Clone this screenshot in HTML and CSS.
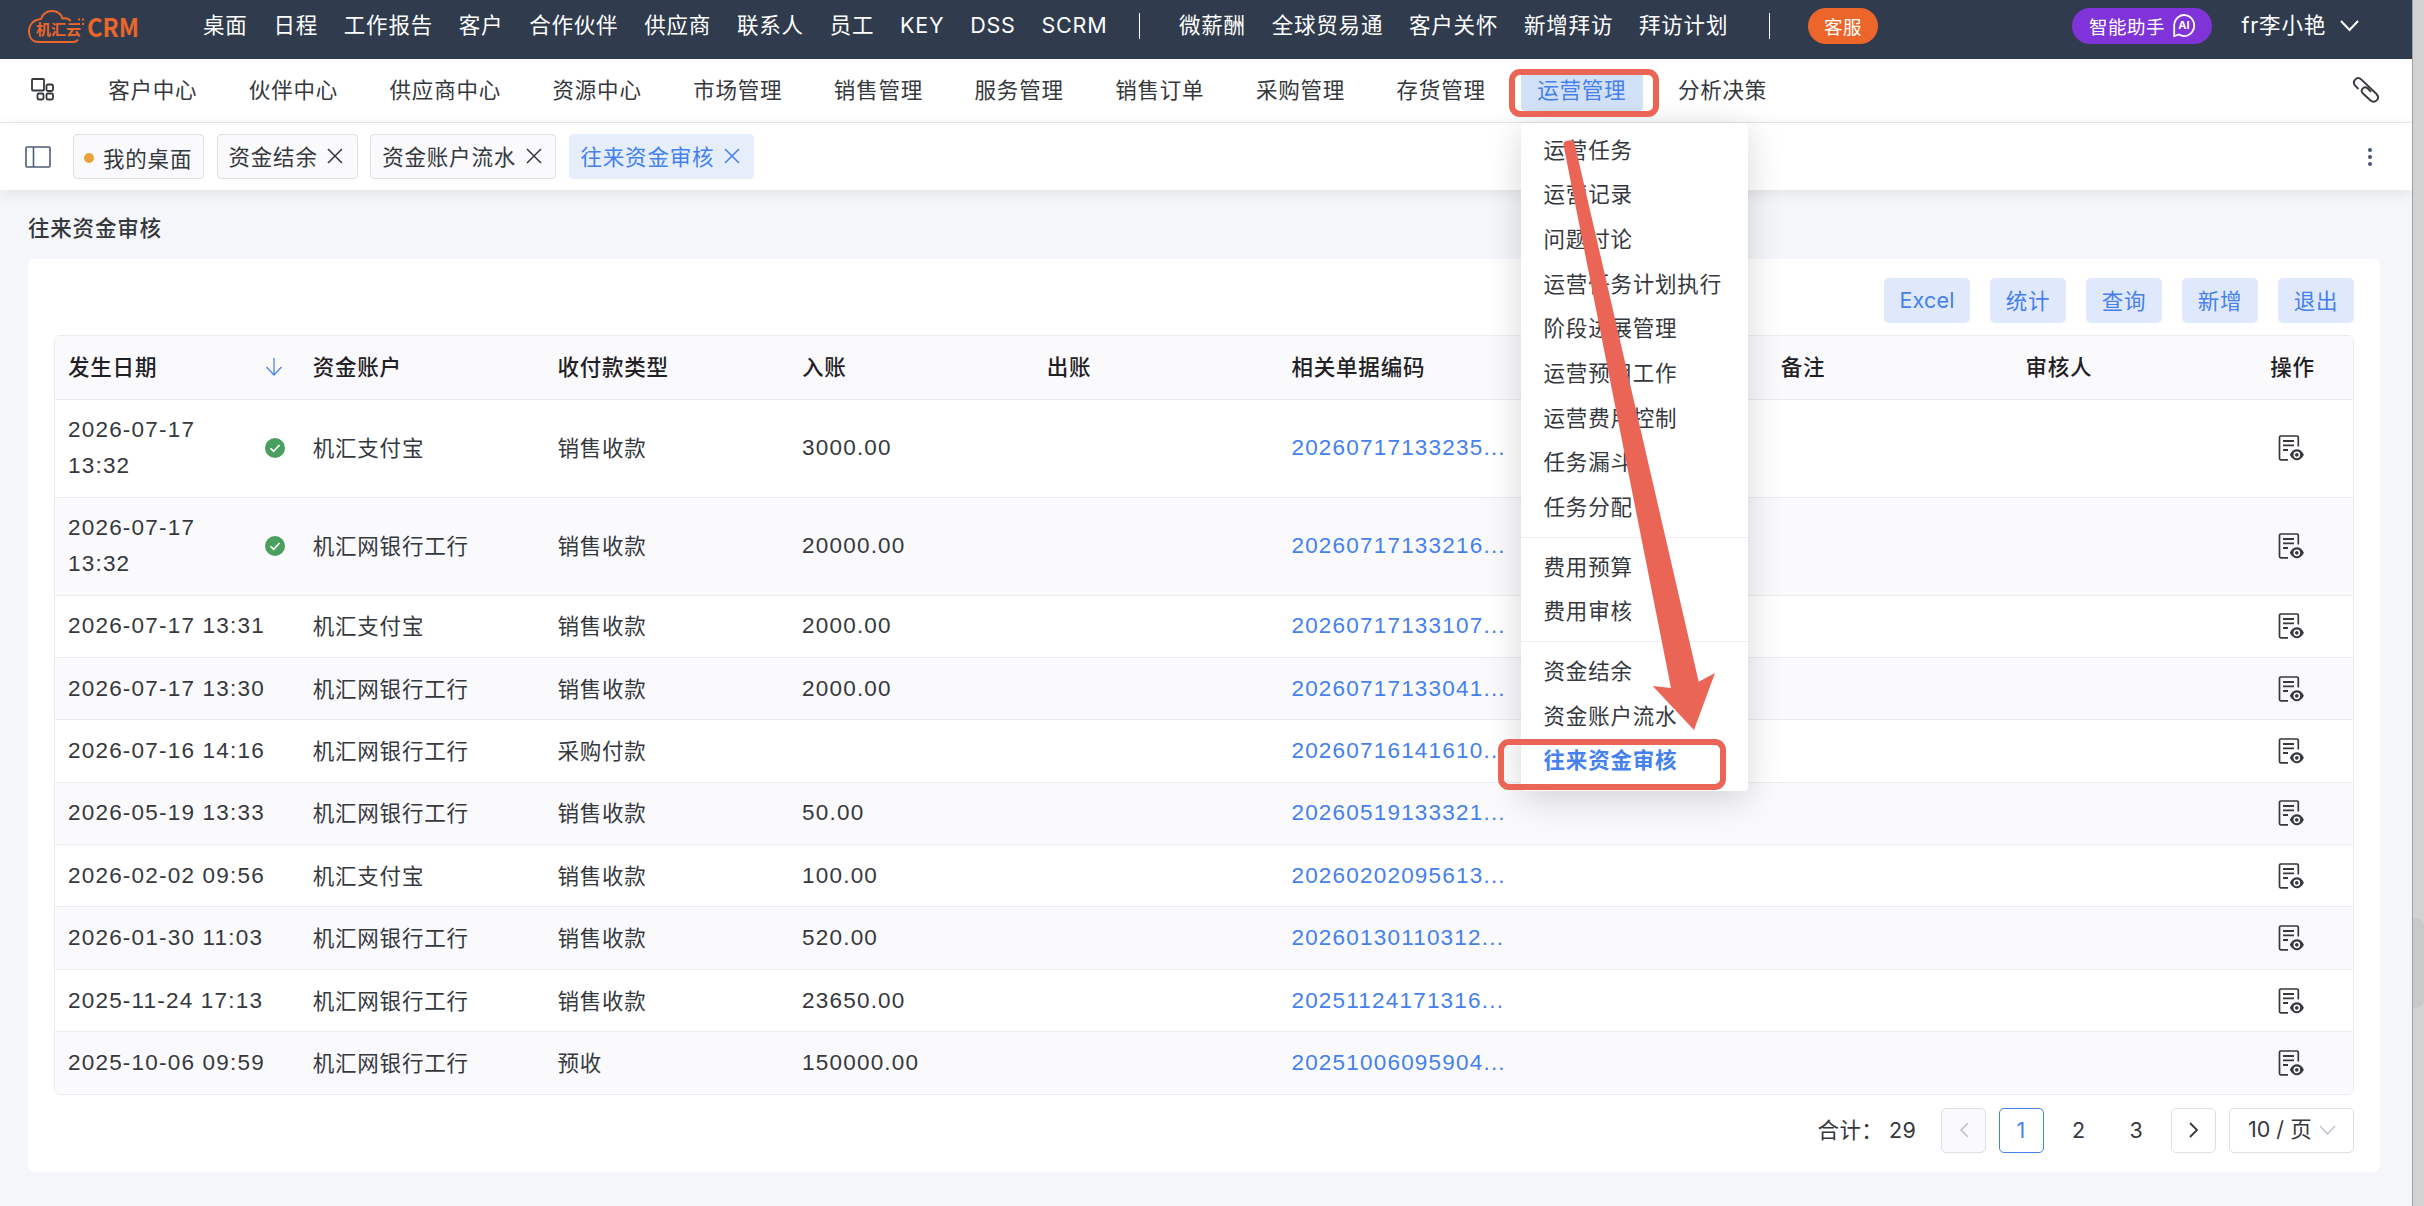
FILE: index.html
```html
<!doctype html>
<html lang="zh-CN">
  <head>
    <meta charset="UTF-8" />
    <meta name="viewport" content="width=device-width, initial-scale=1.0" />
    <title>往来资金审核</title>
    <link rel="stylesheet" href="styles.css">
  </head>
  <body>
    <svg class="sprite">
      <symbol id="icon-view" viewBox="0 0 26 26">
        <path d="M10 24.8H2.8A1.3 1.3 0 0 1 1.5 23.5V2.3A1.3 1.3 0 0 1 2.8 1H19a1.3 1.3 0 0 1 1.3 1.3V11.5" fill="none" stroke="currentColor" stroke-width="1.7" />
        <path d="M5 6H16M5 10.4H16M5 15H10" stroke="currentColor" stroke-width="1.8" />
        <path d="M11.8 19.8C15.5 12.5 22.2 12.5 25.9 19.8C22.2 27.1 15.5 27.1 11.8 19.8Z" fill="currentColor" />
        <circle cx="18.8" cy="19.8" r="2.6" fill="none" stroke="#fff" stroke-width="1.5" />
      </symbol>
      <symbol id="icon-close" viewBox="0 0 16 16">
        <path d="M1 1L15 15M15 1L1 15" stroke="currentColor" stroke-width="1.5" />
      </symbol>
      <symbol id="icon-check" viewBox="0 0 20 20">
        <circle cx="10" cy="10" r="10" fill="#4a9e5e" />
        <path d="M5.5 10.3L8.7 13.3L14.5 7" fill="none" stroke="#fff" stroke-width="1.7" />
      </symbol>
    </svg>

    <div class="page">
      <!-- 顶部导航 -->
      <header class="topbar">
        <svg class="logo" width="116" height="36" viewBox="0 0 116 36">
          <path d="M50 30.5C49 32.5 47 33 45 33H11C4 33 1 28 1 22.5C1 15 6 10.5 13 10C15 4.5 19 2 24 2C29.5 2 33 5 34.5 9.5C38 8.8 41 10 42.5 12" fill="none" stroke="#ec652b" stroke-width="2" />
          <path d="M50 10.5h2M54 10.5h2M50 15h2M54 15h2" stroke="#ec652b" stroke-width="2" />
          <text class="logo-cn" x="8" y="26" textLength="45">机汇云</text>
          <text class="logo-en" x="59" y="28" textLength="52" lengthAdjust="spacingAndGlyphs">CRM</text>
        </svg>
        <nav class="top-menu">
          <a>桌面</a><a>日程</a><a>工作报告</a><a>客户</a><a>合作伙伴</a><a>供应商</a><a>联系人</a><a>员工</a><a>KEY</a><a>DSS</a><a>SCRM</a>
        </nav>
        <span class="divider"></span>
        <nav class="top-menu second">
          <a>微薪酬</a><a>全球贸易通</a><a>客户关怀</a><a>新增拜访</a><a>拜访计划</a>
        </nav>
        <span class="divider"></span>
        <a class="pill service">客服</a>
        <div class="user">
          <a class="pill assistant">智能助手
            <svg width="24" height="25" viewBox="0 0 24 25">
              <path d="M2.2 23V12A10 10.5 0 1 1 7 21.5L2.2 23Z" fill="none" stroke="#fff" stroke-width="1.8" />
              <text class="ai-text" x="12" y="16" text-anchor="middle">AI</text>
            </svg>
          </a>
          <span class="user-name">fr李小艳</span>
          <svg width="19" height="12" viewBox="0 0 19 12"><path d="M1 1L9.5 10L18 1" fill="none" stroke="#fff" stroke-width="2" /></svg>
        </div>
      </header>

      <!-- 二级导航 -->
      <div class="navbar">
        <svg class="nav-grid" width="24" height="24" viewBox="0 0 24 24" fill="none" stroke="#35383d" stroke-width="1.8">
          <rect x="1" y="1" width="12" height="11.5" rx="1" />
          <rect x="15.500" y="6.500" width="6.500" height="6.500" rx="1.500" />
          <rect x="6.500" y="15.500" width="6" height="6" rx="1.500" />
          <rect x="15.500" y="15.500" width="6.500" height="6" rx="1.500" />
        </svg>
        <nav class="main-menu">
          <a>客户中心</a><a>伙伴中心</a><a>供应商中心</a><a>资源中心</a><a>市场管理</a><a>销售管理</a><a>服务管理</a><a>销售订单</a><a>采购管理</a><a>存货管理</a>
          <div class="menu-open">
            <a class="active">运营管理</a>
            <!-- 下拉菜单 -->
            <ul class="dropdown">
              <li>运营任务</li>
              <li>运营记录</li>
              <li>问题讨论</li>
              <li>运营任务计划执行</li>
              <li>阶段进展管理</li>
              <li>运营预用工作</li>
              <li>运营费用控制</li>
              <li>任务漏斗</li>
              <li>任务分配</li>
              <li class="line"></li>
              <li>费用预算</li>
              <li>费用审核</li>
              <li class="line"></li>
              <li>资金结余</li>
              <li>资金账户流水</li>
              <li class="current">往来资金审核</li>
            </ul>
          </div>
          <a>分析决策</a>
        </nav>
        <svg class="nav-link" width="28" height="28" viewBox="0 0 28 28">
          <path d="M6.5 13L3.2 9.7C-.5 5.5 4.8 -.2 9.2 3.4L24.5 18C28.8 22.6 22.8 28.3 18.3 24.3L11 17.5C7.5 14 12 9.5 15.5 12.3L19 15.8" fill="none" stroke="#35383d" stroke-width="1.9" />
        </svg>
      </div>

      <!-- 标签页 -->
      <div class="tabbar">
        <svg class="tab-toggle" width="26" height="22" viewBox="0 0 26 22" fill="none" stroke="#4f5d75" stroke-width="1.6">
          <rect x="1" y="1" width="24" height="20" rx="1" />
          <path d="M8.5 1V21" />
        </svg>
        <div class="tab home"><i class="dot"></i><span>我的桌面</span></div>
        <div class="tab">资金结余<svg class="close"><use href="#icon-close" /></svg></div>
        <div class="tab">资金账户流水<svg class="close"><use href="#icon-close" /></svg></div>
        <div class="tab on">往来资金审核<svg class="close"><use href="#icon-close" /></svg></div>
        <svg class="tab-more" width="4" height="18" viewBox="0 0 4 18" fill="#46546b">
          <circle cx="2" cy="2" r="2" /><circle cx="2" cy="9" r="2" /><circle cx="2" cy="16" r="2" />
        </svg>
      </div>

      <main class="content">
        <h1>往来资金审核</h1>
        <section class="card">
          <div class="actions">
            <button>Excel</button>
            <button>统计</button>
            <button>查询</button>
            <button>新增</button>
            <button>退出</button>
          </div>

          <div class="table-wrap">
            <table>
              <colgroup>
                <col span="9" class="col" />
                <col />
              </colgroup>
              <thead>
                <tr>
                  <th>
                    <div class="date">发生日期
                      <svg class="sort" width="16" height="18" viewBox="0 0 16 18"><path d="M8 0V17M.5 9L8 17L15.5 9" fill="none" stroke="#4a86ee" stroke-width="1.3" /></svg>
                    </div>
                  </th>
                  <th>资金账户</th><th>收付款类型</th><th>入账</th><th>出账</th><th>相关单据编码</th><th></th><th>备注</th><th>审核人</th><th>操作</th>
                </tr>
              </thead>
              <tbody>
                <tr class="tall">
                  <td class="num"><div class="date"><span>2026-07-17 13:32</span><svg class="check"><use href="#icon-check" /></svg></div></td>
                  <td>机汇支付宝</td><td>销售收款</td><td class="num">3000.00</td><td></td><td class="num"><a>20260717133235...</a></td><td></td><td></td><td></td>
                  <td><svg class="view"><use href="#icon-view" /></svg></td>
                </tr>
                <tr class="tall">
                  <td class="num"><div class="date"><span>2026-07-17 13:32</span><svg class="check"><use href="#icon-check" /></svg></div></td>
                  <td>机汇网银行工行</td><td>销售收款</td><td class="num">20000.00</td><td></td><td class="num"><a>20260717133216...</a></td><td></td><td></td><td></td>
                  <td><svg class="view"><use href="#icon-view" /></svg></td>
                </tr>
                <tr>
                  <td class="num">2026-07-17 13:31</td>
                  <td>机汇支付宝</td><td>销售收款</td><td class="num">2000.00</td><td></td><td class="num"><a>20260717133107...</a></td><td></td><td></td><td></td>
                  <td><svg class="view"><use href="#icon-view" /></svg></td>
                </tr>
                <tr>
                  <td class="num">2026-07-17 13:30</td>
                  <td>机汇网银行工行</td><td>销售收款</td><td class="num">2000.00</td><td></td><td class="num"><a>20260717133041...</a></td><td></td><td></td><td></td>
                  <td><svg class="view"><use href="#icon-view" /></svg></td>
                </tr>
                <tr>
                  <td class="num">2026-07-16 14:16</td>
                  <td>机汇网银行工行</td><td>采购付款</td><td class="num"></td><td></td><td class="num"><a>20260716141610...</a></td><td></td><td></td><td></td>
                  <td><svg class="view"><use href="#icon-view" /></svg></td>
                </tr>
                <tr>
                  <td class="num">2026-05-19 13:33</td>
                  <td>机汇网银行工行</td><td>销售收款</td><td class="num">50.00</td><td></td><td class="num"><a>20260519133321...</a></td><td></td><td></td><td></td>
                  <td><svg class="view"><use href="#icon-view" /></svg></td>
                </tr>
                <tr>
                  <td class="num">2026-02-02 09:56</td>
                  <td>机汇支付宝</td><td>销售收款</td><td class="num">100.00</td><td></td><td class="num"><a>20260202095613...</a></td><td></td><td></td><td></td>
                  <td><svg class="view"><use href="#icon-view" /></svg></td>
                </tr>
                <tr>
                  <td class="num">2026-01-30 11:03</td>
                  <td>机汇网银行工行</td><td>销售收款</td><td class="num">520.00</td><td></td><td class="num"><a>20260130110312...</a></td><td></td><td></td><td></td>
                  <td><svg class="view"><use href="#icon-view" /></svg></td>
                </tr>
                <tr>
                  <td class="num">2025-11-24 17:13</td>
                  <td>机汇网银行工行</td><td>销售收款</td><td class="num">23650.00</td><td></td><td class="num"><a>20251124171316...</a></td><td></td><td></td><td></td>
                  <td><svg class="view"><use href="#icon-view" /></svg></td>
                </tr>
                <tr>
                  <td class="num">2025-10-06 09:59</td>
                  <td>机汇网银行工行</td><td>预收</td><td class="num">150000.00</td><td></td><td class="num"><a>20251006095904...</a></td><td></td><td></td><td></td>
                  <td><svg class="view"><use href="#icon-view" /></svg></td>
                </tr>
              </tbody>
            </table>
          </div>

          <!-- 分页 -->
          <div class="pager">
            <span class="total">合计：</span>
            <span class="total-num">29</span>
            <span class="page-btn disabled"><svg width="10" height="16" viewBox="0 0 10 16"><path d="M9 1L2 8L9 15" fill="none" stroke="#c0c4cc" stroke-width="1.6" /></svg></span>
            <span class="page-btn selected">1</span>
            <span class="page-btn plain">2</span>
            <span class="page-btn plain">3</span>
            <span class="page-btn"><svg width="10" height="16" viewBox="0 0 10 16"><path d="M1 1L8 8L1 15" fill="none" stroke="#35383d" stroke-width="1.8" /></svg></span>
            <span class="page-size">10 / 页<svg width="17" height="10" viewBox="0 0 17 10"><path d="M1 1L8.5 9L16 1" fill="none" stroke="#c0c4cc" stroke-width="1.5" /></svg></span>
          </div>
        </section>
      </main>
    </div>

    <div class="edge"><div class="edge-thumb"></div></div>

    <!-- 操作指引 -->
    <div class="mark mark-menu"></div>
    <div class="mark mark-item"></div>
    <svg class="arrow" width="160" height="600" viewBox="1560 135 160 600">
      <path d="M1563.5 145Q1563 141 1568 140.5Q1573 139.5 1574.5 143L1698.7 681.7L1715 673L1694 730L1652.7 686L1671 688Z" fill="#eb6556" />
    </svg>
  </body>
</html>
```

FILE: styles.css
```css
* {
  margin: 0;
  padding: 0;
  box-sizing: border-box;
}
body {
  display: flex;
  width: 2424px;
  height: 1206px;
  overflow: hidden;
  position: relative;
  background: #f5f6f9;
  color: #35383d;
  font-family: Inter, "Noto Sans CJK SC", sans-serif;
  font-size: 21.5px;
  letter-spacing: 0.8px;
}
svg {
  flex: none;
}
.sprite {
  position: absolute;
  width: 0;
  height: 0;
}
.page {
  width: 2412px;
  display: flex;
  flex-direction: column;
}

/* 顶部导航 */
.topbar {
  height: 59px;
  padding: 0 53px 7px 28px;
  display: flex;
  align-items: center;
  background: #303c4d;
  color: #fff;
}
.logo {
  margin: 2px 59px 0 0;
  overflow: visible;
}
.logo-cn {
  font-size: 15px;
  font-weight: bold;
  fill: #ec652b;
  letter-spacing: 0;
}
.logo-en {
  font-family: "Noto Sans CJK SC", sans-serif;
  font-size: 25px;
  font-weight: bold;
  fill: #ec652b;
  letter-spacing: 0;
}
.top-menu {
  width: 936px;
  height: 52px;
  display: flex;
  align-items: baseline;
  gap: 25.8px;
  line-height: 50px;
  white-space: nowrap;
}
.top-menu.second {
  width: 590px;
  margin-left: 39px;
}
.divider {
  width: 1px;
  height: 26px;
  background: #fff;
}
.pill {
  height: 36px;
  padding-bottom: 1px;
  border-radius: 18px;
  display: flex;
  align-items: center;
  justify-content: center;
  font-size: 18.5px;
  letter-spacing: 0.5px;
}
.service {
  width: 70px;
  margin-left: 38px;
  background: #ec652b;
}
.assistant {
  width: 140px;
  gap: 7px;
  background: #8033d8;
}
.ai-text {
  font-size: 11px;
  font-weight: bold;
  fill: #fff;
  letter-spacing: 0;
}
.user {
  margin-left: auto;
  display: flex;
  align-items: center;
}
.user-name {
  margin: 0 14px 0 29px;
  line-height: 36px;
  padding-bottom: 2px;
}

/* 二级导航 */
.navbar {
  height: 64px;
  padding: 0 32px 2px 31px;
  display: flex;
  align-items: center;
  background: #fff;
  border-bottom: 1px solid #e8e9eb;
}
.main-menu {
  display: flex;
  gap: 19.1px;
  margin-left: 37px;
}
.main-menu a {
  display: block;
  height: 42px;
  padding: 0 16.2px;
  line-height: 42px;
  border-radius: 4px;
}
.main-menu a.active {
  background: #d2e0f8;
  color: #4480ee;
}
.menu-open {
  position: relative;
}
.nav-link {
  margin-left: auto;
}
.dropdown {
  position: absolute;
  z-index: 5;
  left: 0;
  top: 54px;
  width: 227px;
  height: 668px;
  padding-top: 5px;
  list-style: none;
  background: #fff;
  border-radius: 4px;
  box-shadow: 0 8px 36px rgba(0, 0, 0, 0.16);
}
.dropdown li {
  height: 44.7px;
  padding-left: 22.5px;
  line-height: 44.7px;
}
.dropdown .line {
  height: 1px;
  margin: 7px 0;
  background: #ecedf0;
}
.dropdown .current {
  color: #4480ee;
  font-weight: bold;
}

/* 标签页 */
.tabbar {
  height: 67px;
  padding: 0 40px 0 25px;
  display: flex;
  align-items: center;
  background: #fff;
  box-shadow: 0 3px 14px rgba(30, 40, 60, 0.09);
}
.tab-toggle {
  margin-right: 22px;
}
.tab {
  height: 45px;
  margin-right: 12.5px;
  padding: 0 13.5px 2px 11px;
  display: flex;
  align-items: center;
  background: #fafafc;
  border: 1px solid #dddfe5;
  border-radius: 4px;
}
.tab.home {
  width: 131px;
  padding: 1px 0 0 10px;
}
.tab.on {
  background: #e6eefc;
  border-color: #e6eefc;
  color: #4480ee;
}
.dot {
  width: 10px;
  height: 10px;
  margin: 2px 9px 0 0;
  border-radius: 50%;
  background: #e9a23b;
}
.close {
  width: 16px;
  height: 16px;
  margin-left: 9.5px;
}
.tab-more {
  margin-left: auto;
}

/* 内容 */
.content {
  padding: 0 32px 0 28px;
}
h1 {
  height: 69px;
  padding-top: 4px;
  line-height: 69px;
  font-size: 21.5px;
  font-weight: 500;
}
.card {
  height: 913px;
  padding: 19px 26px 0 26px;
  background: #fff;
  border-radius: 6px;
}
.actions {
  display: flex;
  justify-content: flex-end;
  gap: 20px;
}
.actions button {
  width: 76px;
  height: 45px;
  padding-bottom: 2px;
  border: none;
  border-radius: 5px;
  background: #e0e9fb;
  color: #4480ee;
  font: inherit;
  letter-spacing: inherit;
}
.actions button:first-child {
  width: 86px;
  letter-spacing: 0.2px;
}
.table-wrap {
  height: 760px;
  margin-top: 12px;
  border: 1px solid #ebecf0;
  border-radius: 6px;
  overflow: hidden;
}
table {
  width: 100%;
  table-layout: fixed;
  border-collapse: separate;
  border-spacing: 0;
}
.col {
  width: 244.7px;
}
th,
td {
  height: 62.4px;
  padding: 0 0 0 13px;
  text-align: left;
  line-height: 36px;
  white-space: nowrap;
  border-bottom: 1px solid #ebecf0;
}
th {
  height: 63.5px;
  background: #fafafc;
  color: #1f2125;
  font-weight: 500;
}
tbody tr:nth-child(even) td {
  background: #fafafc;
}
tr.tall td {
  height: 98px;
}
td a {
  color: #4480ee;
}
.num {
  font-family: "Liberation Sans", Arial, sans-serif;
  font-size: 22.5px;
  letter-spacing: 1.2px;
}
.date {
  display: flex;
  align-items: center;
  justify-content: space-between;
  padding-right: 15px;
}
.date span {
  width: 150px;
  white-space: normal;
}
.sort {
  margin-right: 3px;
}
.check {
  width: 20px;
  height: 20px;
}
.view {
  display: block;
  width: 26px;
  height: 26px;
  margin-left: 8px;
}

/* 分页 */
.pager {
  margin-top: 13px;
  display: flex;
  align-items: center;
  justify-content: flex-end;
  line-height: 41px;
  letter-spacing: 0.3px;
}
.total-num {
  margin: 0 25px 0 6px;
}
.page-btn {
  width: 45px;
  height: 45px;
  margin-right: 12.6px;
  padding-bottom: 1px;
  display: flex;
  align-items: center;
  justify-content: center;
  background: #fff;
  border: 1px solid #dddfe5;
  border-radius: 5px;
}
.page-btn.plain {
  border-color: transparent;
}
.page-btn.disabled {
  background: #fafafc;
}
.page-btn.selected {
  border-color: #4480ee;
  color: #4480ee;
}
.page-size {
  width: 125px;
  height: 45px;
  padding: 0 17px 2px 18px;
  display: flex;
  align-items: center;
  justify-content: space-between;
  white-space: nowrap;
  letter-spacing: 0;
  border: 1px solid #dddfe5;
  border-radius: 5px;
}

/* 窗口右侧边缘 */
.edge {
  width: 12px;
  padding-top: 918px;
  background: #d2d2d2;
  border-left: 1px solid #a0a0a0;
}
.edge-thumb {
  height: 90px;
  background: #c8cac9;
  border-radius: 0 8px 8px 0;
}

/* 操作指引 */
.mark {
  position: absolute;
  z-index: 10;
  border: 6px solid #eb6556;
  border-radius: 11px;
}
.mark-menu {
  left: 1509px;
  top: 69px;
  width: 150px;
  height: 48px;
}
.mark-item {
  left: 1498px;
  top: 739px;
  width: 228px;
  height: 51px;
}
.arrow {
  position: absolute;
  z-index: 10;
  left: 1560px;
  top: 135px;
}
```
